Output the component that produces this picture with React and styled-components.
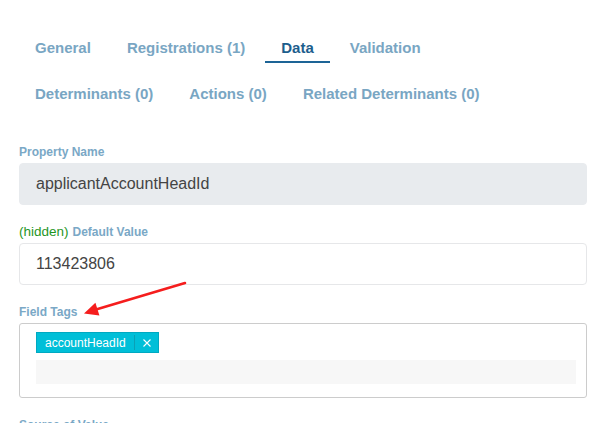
import React from "react";
import styled, { createGlobalStyle } from "styled-components";

const Global = createGlobalStyle`
  html, body {
    margin: 0;
    padding: 0;
    background: #ffffff;
  }
  body {
    font-family: "Liberation Sans", Helvetica, Arial, sans-serif;
    overflow: hidden;
  }
`;

const Page = styled.div`
  position: relative;
  width: 604px;
  height: 423px;
  overflow: hidden;
  box-sizing: border-box;
  padding: 33px 17px 0 19px;
`;

const TabBar = styled.nav`
  display: flex;
  flex-wrap: wrap;
  row-gap: 16px;
  column-gap: 4px;
  width: 540px;
`;

const Tab = styled.div`
  padding: 6px 16px 4px;
  font-size: 15px;
  line-height: 18px;
  font-weight: 700;
  color: ${(p) => (p.$active ? "#1d5e8d" : "#79a6c3")};
  border-bottom: 2px solid ${(p) => (p.$active ? "#1d6496" : "transparent")};
  white-space: nowrap;
  cursor: pointer;
`;

const Form = styled.div`
  display: flex;
  flex-direction: column;
  gap: 20px;
  margin-top: 36px;
`;

const Field = styled.div`
  display: flex;
  flex-direction: column;
  gap: 4px;
`;

const Label = styled.label`
  display: block;
  font-size: 12px;
  line-height: 14px;
  font-weight: 700;
  color: #7aa8c6;
`;

const Hint = styled.span`
  font-size: 13.5px;
  font-weight: 400;
  color: #1f961f;
  margin-right: 4px;
`;

const Input = styled.div`
  box-sizing: border-box;
  height: 42px;
  display: flex;
  align-items: center;
  padding: 0 16px;
  font-size: 16px;
  color: #444444;
  border-radius: 4px;
  background: ${(p) => (p.$readOnly ? "#e8ebee" : "#ffffff")};
  border: 1px solid ${(p) => (p.$readOnly ? "#e8ebee" : "#e6e7e9")};
`;

const TagBox = styled.div`
  box-sizing: border-box;
  height: 75px;
  border: 1px solid #cccccc;
  border-radius: 3px;
  padding: 8px 10px 13px 16px;
  display: flex;
  flex-direction: column;
  gap: 7px;
`;

const TagRow = styled.div`
  display: flex;
  gap: 4px;
`;

const Tag = styled.span`
  box-sizing: border-box;
  height: 21px;
  display: inline-flex;
  align-items: center;
  background: #00bfd8;
  border: 1px solid #00a9c1;
  color: #ffffff;
  font-size: 12px;
  padding-left: 8px;
`;

const TagRemove = styled.span`
  display: inline-flex;
  align-items: center;
  margin-left: 8px;
  padding: 0 7px 0 8px;
  height: 15px;
  border-left: 1px solid #0aa0b6;
  cursor: pointer;
`;

const TagInput = styled.div`
  height: 24px;
  background: #f7f7f7;
`;

const Pointer = styled.svg`
  position: absolute;
  left: 80px;
  top: 276px;
  width: 112px;
  height: 44px;
  pointer-events: none;
`;

const tabs = [
  { label: "General" },
  { label: "Registrations (1)" },
  { label: "Data", active: true },
  { label: "Validation" },
  { label: "Determinants (0)" },
  { label: "Actions (0)" },
  { label: "Related Determinants (0)" },
];

function CloseIcon() {
  return (
    <svg width="8" height="8" viewBox="0 0 8 8">
      <path d="M0.5 0.5 L7.5 7.5 M7.5 0.5 L0.5 7.5" stroke="#ffffff" strokeWidth="1.1" />
    </svg>
  );
}

export default function App() {
  return (
    <>
      <Global />
      <Page>
        <TabBar>
          {tabs.map((t) => (
            <Tab key={t.label} $active={t.active}>
              {t.label}
            </Tab>
          ))}
        </TabBar>

        <Form>
          <Field>
            <Label>Property Name</Label>
            <Input $readOnly>applicantAccountHeadId</Input>
          </Field>

          <Field>
            <Label>
              <Hint>(hidden)</Hint>Default Value
            </Label>
            <Input>113423806</Input>
          </Field>

          <Field>
            <Label>Field Tags</Label>
            <TagBox>
              <TagRow>
                <Tag>
                  accountHeadId
                  <TagRemove>
                    <CloseIcon />
                  </TagRemove>
                </Tag>
              </TagRow>
              <TagInput />
            </TagBox>
          </Field>

          <Field>
            <Label>Source of Value</Label>
          </Field>
        </Form>

        {/* red call-out arrow pointing at the tags label */}
        <Pointer viewBox="80 276 112 44">
          <line
            x1="185"
            y1="283"
            x2="96"
            y2="309.5"
            stroke="#f51d1d"
            strokeWidth="2.6"
            strokeLinecap="round"
          />
          <polygon points="84,313.5 95.4,302.8 99.4,315.6" fill="#f51d1d" />
        </Pointer>
      </Page>
    </>
  );
}
